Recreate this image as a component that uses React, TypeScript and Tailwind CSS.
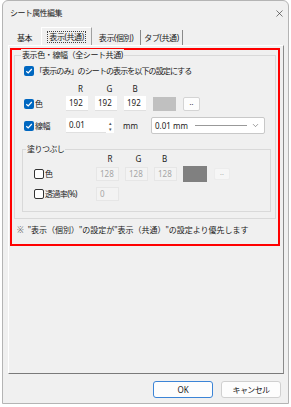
import { X, ChevronDown } from 'lucide-react';

const font = { fontFamily: '"Noto Sans", "Noto Sans CJK JP", sans-serif' };

function Check({ on }: { on: boolean }) {
  if (on) {
    return (
      <span className="flex h-[10px] w-[10px] shrink-0 items-center justify-center rounded-[2px] bg-[#0067c0]">
        <svg width="8" height="8" viewBox="0 0 8 8">
          <path d="M1.3 4.2 L3.2 6 L6.8 2" fill="none" stroke="#fff" strokeWidth="1.2" />
        </svg>
      </span>
    );
  }
  return <span className="h-[10px] w-[10px] shrink-0 rounded-[2px] border border-[#333] bg-white" />;
}

function Field({ value, w, off }: { value: string; w: string; off?: boolean }) {
  return (
    <div
      className={`flex h-full items-center pl-[3px] text-[8px] ${w} ${
        off ? 'border border-[#e6e6e6] bg-[#f3f3f3] text-[#a6a6a6]' : 'border-b border-[#e0e0e0] bg-white text-[#1a1a1a]'
      }`}
    >
      {value}
    </div>
  );
}

export default function App() {
  return (
    <div className="h-[407px] w-[291px] overflow-hidden bg-white text-[#1a1a1a]" style={font}>
      <div className="ml-[2px] flex h-[404px] w-[287px] flex-col rounded-t-[6px] border border-[#b4b4b4] bg-[#f0f0f0]">
        {/* title */}
        <div className="flex h-[24px] items-center justify-between pl-[7px] pr-[3px]">
          <span className="text-[8px] tracking-[-0.6px]">シート属性編集</span>
          <X className="h-[11px] w-[11px] text-[#333]" strokeWidth={1.4} />
        </div>

        {/* tabs */}
        <div className="mt-[2px] ml-[5px] flex h-[18px] items-end text-[8px] tracking-[-0.4px]">
          <div className="flex h-[15px] w-[33px] items-center justify-center">基本</div>
          <div className="flex h-[18px] w-[51px] items-center justify-center border-l border-t border-r border-l-white border-t-white border-r-[#a0a0a0] bg-[#f0f0f0]">
            <span className="border border-dotted border-[#444] px-[1px] leading-[10px]">表示(共通)</span>
          </div>
          <div className="flex h-[15px] w-[49px] items-center justify-center border-r border-[#8a8a8a]">表示(個別)</div>
          <div className="flex h-[15px] w-[42px] items-center justify-center border-r border-[#8a8a8a]">タブ(共通)</div>
        </div>

        {/* tab page */}
        <div className="ml-[5px] h-[329px] w-[276px] border border-l-white border-t-white border-r-[#8a8a8a] border-b-[#7a7a7a]">
          <div className="ml-[1px] mt-[2px] flex h-[198px] w-[270px] flex-col border-2 border-[#ff0000] px-[2px]">
            {/* outer group */}
            <div className="relative mt-[5px] h-[164px] w-[262px] border border-[#d9d9d9]">
              <span className="absolute left-[6px] top-[-7px] bg-[#f0f0f0] px-[1px] text-[8px] leading-[12px] tracking-[-0.4px]">
                表示色・線幅（全シート共通)
              </span>
              <div className="flex flex-col pl-[9px] pt-[9px]">
                <div className="flex h-[12px] items-center gap-[1px] text-[8px] tracking-[-0.9px]">
                  <Check on />
                  <span>「表示のみ」のシートの表示を以下の設定にする</span>
                </div>

                <div className="mt-[7px] flex h-[10px] items-center text-[8px]">
                  <div className="w-[42px]" />
                  <span className="w-[29px] text-center">R</span>
                  <span className="w-[29px] text-center">G</span>
                  <span className="w-[22px] text-center">B</span>
                </div>

                <div className="mt-[2px] flex h-[15px] items-center">
                  <div className="flex w-[42px] items-center gap-[1px] text-[8px]">
                    <Check on />
                    <span>色</span>
                  </div>
                  <div className="flex h-[15px] gap-[7px]">
                    <Field value="192" w="w-[22px]" />
                    <Field value="192" w="w-[22px]" />
                    <Field value="192" w="w-[22px]" />
                  </div>
                  <div className="ml-[7px] h-[14px] w-[23px] bg-[#c0c0c0]" />
                  <div className="ml-[7px] flex h-[14px] w-[17px] items-start justify-center rounded-[2px] border border-[#d4d4d4] bg-[#fdfdfd] text-[7px] leading-[9px] text-[#333]">
                    ..
                  </div>
                </div>

                <div className="mt-[6px] flex h-[17px] items-center">
                  <div className="flex w-[42px] items-center gap-[1px] text-[8px] tracking-[-0.4px]">
                    <Check on />
                    <span>線幅</span>
                  </div>
                  <div className="flex h-[15px]">
                    <Field value="0.01" w="w-[40px]" />
                    <div className="flex w-[8px] flex-col items-center justify-center bg-white text-[5px] leading-[6px] text-[#555]">
                      <span>▴</span>
                      <span>▾</span>
                    </div>
                  </div>
                  <span className="ml-[9px] text-[8px]">mm</span>
                  <div className="ml-[13px] flex h-[17px] w-[114px] items-center rounded-[2px] border border-[#c8c8c8] bg-white pl-[3px] pr-[4px] text-[8px]">
                    <span>0.01 mm</span>
                    <span className="ml-[7px] h-px w-[52px] bg-[#999]" />
                    <ChevronDown className="ml-auto h-[9px] w-[9px] text-[#555]" strokeWidth={1.5} />
                  </div>
                </div>
              </div>

              {/* inner group */}
              <div className="relative ml-[7px] mt-[15px] h-[63px] w-[249px] border border-[#d9d9d9]">
                <span className="absolute left-[3px] top-[-7px] bg-[#f0f0f0] px-[1px] text-[8px] leading-[12px] tracking-[-0.6px]">
                  塗りつぶし
                </span>
                <div className="flex flex-col pl-[11px] pt-[4px]">
                  <div className="flex h-[10px] items-center text-[8px]">
                    <div className="w-[62px]" />
                    <span className="w-[28px] text-center">R</span>
                    <span className="w-[29px] text-center">G</span>
                    <span className="w-[23px] text-center">B</span>
                  </div>
                  <div className="mt-[2px] flex h-[16px] items-center">
                    <div className="flex w-[62px] items-center gap-[1px] text-[8px]">
                      <Check on={false} />
                      <span>色</span>
                    </div>
                    <div className="flex h-[14px] gap-[6px]">
                      <Field value="128" w="w-[23px]" off />
                      <Field value="128" w="w-[23px]" off />
                      <Field value="128" w="w-[23px]" off />
                    </div>
                    <div className="ml-[6px] h-[16px] w-[24px] bg-[#808080]" />
                    <div className="ml-[7px] flex h-[12px] w-[16px] items-start justify-center rounded-[2px] border border-[#ececec] bg-[#f6f6f6] text-[7px] leading-[8px] text-[#b0b0b0]">
                      ..
                    </div>
                  </div>
                  <div className="mt-[5px] flex h-[14px] items-center">
                    <div className="flex w-[62px] items-center gap-[1px] text-[8px] tracking-[-0.6px]">
                      <Check on={false} />
                      <span>透過率(%)</span>
                    </div>
                    <div className="flex h-[14px]">
                      <Field value="0" w="w-[23px]" off />
                    </div>
                  </div>
                </div>
              </div>
            </div>

            {/* note */}
            <div className="mt-[5px] flex h-[12px] items-center pl-[3px] text-[8px]">
              <span className="text-[#666]">※</span>
              <span className="ml-[4px]">"表示（個別）"の設定が"表示（共通）"の設定より優先します</span>
            </div>
          </div>
        </div>

        {/* buttons */}
        <div className="mt-[7px] flex justify-end gap-[8px] pr-[7px]">
          <button className="flex h-[17px] w-[60px] items-center justify-center rounded-[3px] border border-[#3b84d6] bg-[#fdfdfd] text-[8px]">
            OK
          </button>
          <button className="flex h-[17px] w-[60px] items-center justify-center rounded-[3px] border border-[#d0d0d0] bg-[#fdfdfd] text-[8px] tracking-[-0.6px]">
            キャンセル
          </button>
        </div>
      </div>
    </div>
  );
}
